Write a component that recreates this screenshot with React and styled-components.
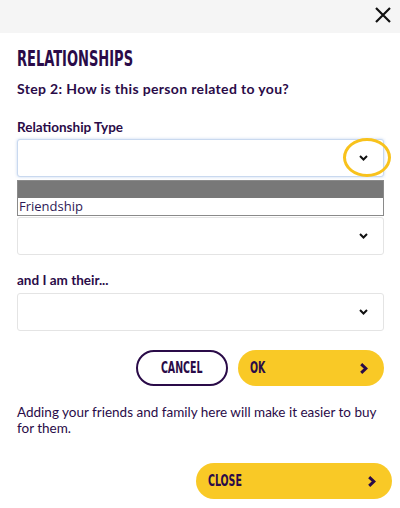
import React from "react";
import styled, { createGlobalStyle } from "styled-components";

const GlobalStyle = createGlobalStyle`
  html, body { margin: 0; padding: 0; background: #fff; overflow: hidden; }
  body { font-family: Lato, "Open Sans", sans-serif; color: #2a0b48; }
  * { box-sizing: border-box; }
`;

const Modal = styled.div`
  width: 400px;
  height: 508px;
  background: #fff;
  display: flex;
  flex-direction: column;
`;

const TopBar = styled.div`
  height: 33px;
  background: #f5f5f5;
  display: flex;
  justify-content: flex-end;
  align-items: center;
  padding-right: 7px;
`;

const CloseIcon = styled.button`
  border: none;
  background: none;
  padding: 0;
  width: 20px;
  height: 20px;
  margin-top: -3px;
  display: flex;
  align-items: center;
  justify-content: center;
`;

const Body = styled.div`
  padding: 15px 16px 0 17px;
  display: flex;
  flex-direction: column;
`;

// condensed display face, squeezed from DejaVu Sans Condensed
const Condensed = styled.span`
  display: inline-block;
  font-family: "DejaVu Sans Condensed", "DejaVu Sans", sans-serif;
  font-stretch: condensed;
  font-weight: 700;
  font-size: ${(p) => p.$size}px;
  line-height: 1.1;
  transform: scaleX(${(p) => p.$sx || 0.72});
  transform-origin: ${(p) => p.$origin || "left"} center;
  white-space: nowrap;
`;

const Title = styled.h1`
  margin: 0;
  height: 24px;
  display: flex;
  align-items: center;
  font-size: 21px;
  color: #2a0b48;
`;

const Step = styled.p`
  margin: 8px 0 0;
  font-weight: 700;
  font-size: 14px;
  letter-spacing: 0.35px;
  line-height: 18px;
`;

const Label = styled.div`
  margin-top: ${(p) => p.$top || 20}px;
  font-weight: 700;
  font-size: 13.5px;
  line-height: 18px;
`;

const SelectWrap = styled.div`
  position: relative;
  margin-top: ${(p) => p.$top || 4}px;
`;

const SelectBox = styled.div`
  height: 38px;
  border: 1px solid ${(p) => (p.$focus ? "#c9d9ef" : "#e4e4e4")};
  border-radius: 3px;
  box-shadow: ${(p) => (p.$focus ? "0 0 3px rgba(120,160,220,0.45)" : "none")};
  display: flex;
  align-items: center;
  justify-content: flex-end;
  padding-right: 15px;
  background: #fff;
`;

const FocusRing = styled.div`
  position: absolute;
  right: -7px;
  top: -1px;
  width: 48px;
  height: 39px;
  border: 3.5px solid #f8c21c;
  border-radius: 50%;
`;

const Dropdown = styled.div`
  position: absolute;
  left: 0;
  right: 0;
  top: 41px;
  border: 1px solid #8a8a8a;
  background: #fff;
  z-index: 2;
`;

const Option = styled.div`
  height: 17px;
  font-family: "Open Sans", sans-serif;
  font-size: 13px;
  line-height: 17px;
  padding-left: 1px;
  color: #2e1a56;
  background: ${(p) => (p.$selected ? "#787878" : "#fff")};
`;

const ButtonRow = styled.div`
  display: flex;
  justify-content: flex-end;
  gap: 10px;
  margin-top: 19px;
`;

const PillButton = styled.button`
  height: 36px;
  width: ${(p) => p.$w}px;
  border-radius: 18px;
  border: ${(p) => (p.$outline ? "2px solid #2a0b48" : "none")};
  background: ${(p) => (p.$outline ? "#fff" : "#f9c926")};
  color: #2a0b48;
  display: flex;
  align-items: center;
  justify-content: ${(p) => (p.$outline ? "center" : "space-between")};
  padding: ${(p) => (p.$outline ? "0" : "0 16px 0 12px")};
  overflow: hidden;
`;

const Note = styled.p`
  margin: 18px 0 0;
  font-size: 13.5px;
  line-height: 16px;
  color: #2a0b48;
`;

const CloseRow = styled.div`
  display: flex;
  justify-content: flex-end;
  margin-top: 27px;
  margin-right: -8px;
`;

const Chevron = () => (
  <svg width="9" height="6" viewBox="0 0 9 6">
    <path d="M1 1 L4.5 4.5 L8 1" fill="none" stroke="#111" strokeWidth="2" />
  </svg>
);

const Arrow = () => (
  <svg width="8" height="11" viewBox="0 0 8 11">
    <path d="M1.2 1.2 L5.8 5.5 L1.2 9.8" fill="none" stroke="#2a0b48" strokeWidth="3" />
  </svg>
);

export default function App() {
  return (
    <>
      <GlobalStyle />
      <Modal>
        <TopBar>
          <CloseIcon aria-label="close">
            <svg width="16" height="16" viewBox="0 0 16 16">
              <path d="M1 1 L15 15 M15 1 L1 15" stroke="#111" strokeWidth="2.2" />
            </svg>
          </CloseIcon>
        </TopBar>
        <Body>
          <Title>
            <Condensed $size={21} $sx={0.69}>RELATIONSHIPS</Condensed>
          </Title>
          <Step>Step 2: How is this person related to you?</Step>
          <Label $top={20}>Relationship Type</Label>
          <SelectWrap $top={3}>
            <SelectBox $focus>
              <Chevron />
            </SelectBox>
            <FocusRing />
            <Dropdown>
              <Option $selected />
              <Option>Friendship</Option>
            </Dropdown>
          </SelectWrap>
          <SelectWrap $top={40}>
            <SelectBox>
              <Chevron />
            </SelectBox>
          </SelectWrap>
          <Label $top={16}>and I am their...</Label>
          <SelectWrap $top={4}>
            <SelectBox>
              <Chevron />
            </SelectBox>
          </SelectWrap>
          <ButtonRow>
            <PillButton $outline $w={92}>
              <Condensed $size={15} $sx={0.7} $origin="center">CANCEL</Condensed>
            </PillButton>
            <PillButton $w={146}>
              <Condensed $size={15} $sx={0.7}>OK</Condensed>
              <Arrow />
            </PillButton>
          </ButtonRow>
          <Note>Adding your friends and family here will make it easier to buy for them.</Note>
          <CloseRow>
            <PillButton $w={196}>
              <Condensed $size={15} $sx={0.7}>CLOSE</Condensed>
              <Arrow />
            </PillButton>
          </CloseRow>
        </Body>
      </Modal>
    </>
  );
}
